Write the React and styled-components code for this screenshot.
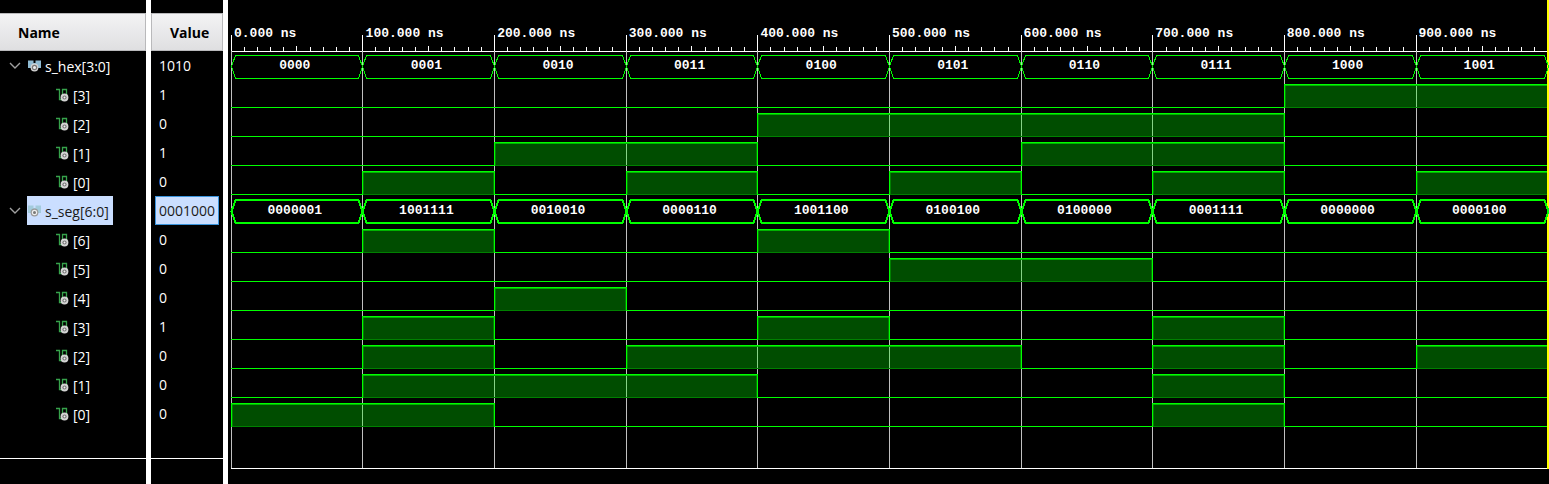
import React, { useLayoutEffect, useRef, useState } from "react";
import styled, { createGlobalStyle } from "styled-components";

const Global = createGlobalStyle`
  body { margin: 0; background: #000; }
  * { box-sizing: border-box; }
`;

const PERIODS = 10;
const ROW = 29;

const SIGNALS = [
  { name: "s_hex[3:0]", value: "1010", bus: ["0000", "0001", "0010", "0011", "0100", "0101", "0110", "0111", "1000", "1001"] },
  { name: "[3]", value: "1", bits: "0000000011" },
  { name: "[2]", value: "0", bits: "0000111100" },
  { name: "[1]", value: "1", bits: "0011001100" },
  { name: "[0]", value: "0", bits: "0101010101" },
  { name: "s_seg[6:0]", value: "0001000", selected: true, bus: ["0000001", "1001111", "0010010", "0000110", "1001100", "0100100", "0100000", "0001111", "0000000", "0000100"] },
  { name: "[6]", value: "0", bits: "0100100000" },
  { name: "[5]", value: "0", bits: "0000011000" },
  { name: "[4]", value: "0", bits: "0010000000" },
  { name: "[3]", value: "1", bits: "0100100100" },
  { name: "[2]", value: "0", bits: "0101110101" },
  { name: "[1]", value: "0", bits: "0111000100" },
  { name: "[0]", value: "0", bits: "1100000100" },
];

const Viewer = styled.main`
  display: flex;
  min-height: 100vh;
  background: #000;
  color: #fff;
  font: 14px/20px "Open Sans", "Noto Sans", sans-serif;
`;

const Column = styled.section`
  display: flex;
  flex-direction: column;
  flex: none;
  width: ${(p) => p.$width}px;
  padding-top: 13px;
  border-right: 5px solid #fff;
`;

const ColumnHeader = styled.h2`
  display: flex;
  align-items: center;
  height: 38px;
  margin: 0;
  padding: 2px 0 0 18px;
  border: 1px solid #b9b9bb;
  border-left-width: ${(p) => (p.$first ? 0 : 1)}px;
  background: linear-gradient(#f3f3f4, #dfdfe1);
  color: #000;
  font-size: 14px;
  line-height: 20px;
  font-weight: 700;
`;

const List = styled.ul`
  margin: 0;
  padding: 0 0 30px;
  border-bottom: 1px solid #fff;
  list-style: none;
`;

const NameRow = styled.li`
  display: flex;
  align-items: center;
  height: ${ROW}px;
  padding-left: ${(p) => (p.$bit ? 55 : 8)}px;
`;

const Toggle = styled.button`
  display: flex;
  align-items: center;
  justify-content: center;
  width: 14px;
  height: 16px;
  margin-right: 5px;
  padding: 0;
  border: 0;
  background: none;
  color: #a0a0a0;
`;

const SignalName = styled.span`
  display: flex;
  align-items: center;
  gap: 4px;
  height: ${ROW}px;
  padding: 0 4px 0 1px;
  background: ${(p) => (p.$selected ? "#cadeff" : "none")};
  color: ${(p) => (p.$selected ? "#1a1a1a" : "#fff")};
`;

const Caption = styled.span`
  padding-top: 2px;
`;

const ValueRow = styled.li`
  display: flex;
  height: ${ROW}px;
  padding: 0 4px;
`;

const Value = styled.span`
  flex: 1;
  padding: 4px 3px 3px;
  border: 1px solid ${(p) => (p.$selected ? "#3a94dc" : "transparent")};
  background: ${(p) => (p.$selected ? "#cadeff" : "none")};
  color: ${(p) => (p.$selected ? "#1a1a1a" : "#fff")};
`;

const WavePanel = styled.section`
  flex: 1;
  min-width: 0;
  padding-left: 3px;
`;

const Plot = styled.div`
  border-right: 2px solid #ff0;
`;

const Track = styled.div`
  display: grid;
  grid-template-columns: repeat(${PERIODS}, minmax(0, 1fr));
  height: ${(p) => p.$height}px;
  font: 700 13px/16px "Liberation Mono", monospace;

  > * { grid-row: 1; }
  > svg { grid-column: 1 / -1; display: block; width: 100%; height: 100%; }
`;

const Rows = styled.div`
  margin-top: -1px;
`;

const TimeLabel = styled.span`
  grid-column: ${(p) => p.$slot};
  padding: 26px 0 0 3px;
  white-space: nowrap;
`;

const BusValue = styled.span`
  grid-column: ${(p) => p.$slot};
  padding: 7px 4px 0 0;
  text-align: center;
`;

function BusIcon({ selected }) {
  return (
    <svg width="13" height="12" viewBox="0 0 13 12" aria-hidden="true">
      <path d="M0 .5h5.5v2.5h2V.5H13V8H9.500L6.500 11 3.500 8H0z" fill={selected ? "#a3cbdc" : "#8fbbd3"} />
      <circle cx="6.500" cy="7.500" r="3.900" fill={selected ? "#999" : "#d4d4d4"} />
      <circle cx="6.500" cy="7.500" r="2.700" fill={selected ? "#eee" : "#777"} />
      <circle cx="6.500" cy="7.500" r="1.500" fill={selected ? "#777" : "#eee"} />
    </svg>
  );
}

function BitIcon() {
  return (
    <svg width="13" height="14" viewBox="0 0 13 14" aria-hidden="true">
      <path d="M0 1.500h3.500v10H7M6.500 8V1.500h4V8" fill="none" stroke="#36a34b" strokeWidth="1.300" />
      <circle cx="8.500" cy="9.500" r="3.900" fill="#d4d4d4" />
      <circle cx="8.500" cy="9.500" r="2.100" fill="#777" />
      <circle cx="8.500" cy="9.500" r="1" fill="#eee" />
    </svg>
  );
}

function Grid({ edges, height }) {
  return edges.slice(0, PERIODS).map((x, i) => (
    <rect key={i} x={x} y="0" width="1" height={height} fill="#c0c0c0" />
  ));
}

function Ruler({ edges, width }) {
  const ticks = [];
  for (let i = 0; i < PERIODS * 10; i++) {
    const x = i % 10 === 0 ? edges[i / 10] : Math.floor((width * i) / (PERIODS * 10));
    const h = i % 10 === 0 ? 16 : i % 5 === 0 ? 5 : 4;
    ticks.push(<rect key={i} x={x} y={51 - h} width="1" height={h} />);
  }
  return (
    <Track $height={52}>
      <svg fill="#fff" shapeRendering="crispEdges" aria-hidden="true">
        {ticks}
        <rect y="51" width="100%" height="1" />
      </svg>
      {Array.from({ length: PERIODS }, (_, i) => (
        <TimeLabel key={i} $slot={i + 1}>{i * 100}.000 ns</TimeLabel>
      ))}
    </Track>
  );
}

function BusTrack({ signal, edges }) {
  const w = signal.selected ? 2 : 1;
  const top = signal.selected ? 4 : 4.5;
  const bottom = signal.selected ? 27 : 27.5;
  const mid = 15.5;
  return (
    <Track $height={ROW}>
      <svg shapeRendering="crispEdges" aria-hidden="true" overflow="visible">
        <Grid edges={edges} height={ROW} />
        {signal.bus.map((v, i) => {
          const a = edges[i] + 0.5;
          const b = edges[i + 1] + 0.5;
          return (
            <path
              key={i}
              d={`M${a} ${mid}L${a + 4} ${top}H${b - 4}L${b} ${mid}L${b - 4} ${bottom}H${a + 4}Z`}
              fill="none"
              stroke="#0f0"
              strokeWidth={w}
            />
          );
        })}
      </svg>
      {signal.bus.map((v, i) => (
        <BusValue key={i} $slot={i + 1}>{v}</BusValue>
      ))}
    </Track>
  );
}

function BitTrack({ signal, edges }) {
  const runs = [];
  [...signal.bits].forEach((bit, i) => {
    const last = runs[runs.length - 1];
    if (last && last.bit === bit) last.end = i + 1;
    else runs.push({ bit, start: i, end: i + 1 });
  });
  return (
    <Track $height={ROW}>
      <svg shapeRendering="crispEdges" aria-hidden="true">
        <Grid edges={edges} height={ROW} />
        {runs.map(({ bit, start, end }) => {
          const a = edges[start];
          const b = edges[end];
          if (bit === "0") return <rect key={start} x={a} y="27" width={b - a + 1} height="1" fill="#0f0" />;
          return (
            <g key={start}>
              <rect x={a} y="4" width={b - a + 1} height="24" fill="#0f0" fillOpacity="0.3" />
              <path d={`M${a + 1.5} 27V5.5M${b - 0.5} 5V27.5H${a + 1}`} fill="none" stroke="#008000" />
              <rect x={a + 1} y="5" width={b - a - 1} height="1" fill="#00b400" />
              <path d={`M${a + 0.5} 28V4.5H${b + 0.5}V28`} fill="none" stroke="#0f0" />
            </g>
          );
        })}
      </svg>
    </Track>
  );
}

export default function App() {
  const plot = useRef(null);
  const [width, setWidth] = useState(0);

  useLayoutEffect(() => {
    const measure = () => setWidth(plot.current.clientWidth + 1);
    measure();
    const observer = new ResizeObserver(measure);
    observer.observe(plot.current);
    return () => observer.disconnect();
  }, []);

  const edges = Array.from({ length: PERIODS + 1 }, (_, i) => Math.floor((width * i) / PERIODS));

  return (
    <Viewer>
      <Global />
      <Column $width={151}>
        <ColumnHeader $first>Name</ColumnHeader>
        <List>
          {SIGNALS.map((s, i) => (
            <NameRow key={i} $bit={!s.bus}>
              {s.bus && (
                <Toggle aria-label={`Collapse ${s.name}`}>
                  <svg width="12" height="8" viewBox="0 0 12 8" fill="none" stroke="currentColor" strokeWidth="1.4">
                    <path d="M1 1l5 5 5-5" />
                  </svg>
                </Toggle>
              )}
              <SignalName $selected={s.selected}>
                {s.bus ? <BusIcon selected={s.selected} /> : <BitIcon />}
                <Caption>{s.name}</Caption>
              </SignalName>
            </NameRow>
          ))}
        </List>
      </Column>
      <Column $width={77}>
        <ColumnHeader>Value</ColumnHeader>
        <List>
          {SIGNALS.map((s, i) => (
            <ValueRow key={i}>
              <Value $selected={s.selected}>{s.value}</Value>
            </ValueRow>
          ))}
        </List>
      </Column>
      <WavePanel>
        <Plot ref={plot}>
          <Ruler edges={edges} width={width} />
          <Rows>
            {SIGNALS.map((s, i) =>
              s.bus ? <BusTrack key={i} signal={s} edges={edges} /> : <BitTrack key={i} signal={s} edges={edges} />
            )}
            <Track $height={41}>
              <svg shapeRendering="crispEdges" aria-hidden="true">
                <Grid edges={edges} height={41} />
                <rect y="40" width="100%" height="1" fill="#fff" />
              </svg>
            </Track>
          </Rows>
        </Plot>
      </WavePanel>
    </Viewer>
  );
}
